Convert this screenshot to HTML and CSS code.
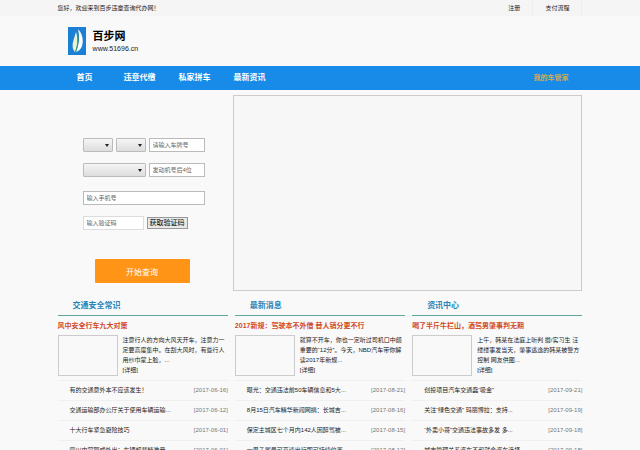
FILE: index.html
```html
<!DOCTYPE html>
<html lang="zh-CN">
<head>
    <meta charset="UTF-8">
    <meta name="viewport" content="width=device-width, initial-scale=1.0">
    <title>百步网</title>
    <link rel="stylesheet" href="styles.css">
</head>
<body>
    <div class="topbar">
        <div class="container topbar-inner">
            <span>您好，欢迎来到百步违章查询代办网！</span>
            <div class="topbar-links">
                <a href="#">注册</a>
                <a href="#">支付流程</a>
            </div>
        </div>
    </div>
    <header class="container header">
        <svg class="logo" viewBox="0 0 18 28" aria-hidden="true">
            <rect width="18" height="28" fill="#1b7fd6"/>
            <path d="M10 2C14 6 16 13 14 19C13 22 11 24 8 25C11 18 12 10 10 2Z" fill="#fff"/>
            <path d="M8 5C10 11 10 18 7 25C5 23 4 20 5 15C6 11 7 8 8 5Z" fill="#e8f3d2"/>
            <path d="M9 4C11 11 10 19 7 26" fill="none" stroke="#3d9a62"/>
        </svg>
        <div>
            <h1 class="site-name">百步网</h1>
            <p class="site-url">www.51696.cn</p>
        </div>
    </header>
    <nav class="nav">
        <div class="container nav-inner">
            <a href="#">首页</a>
            <a href="#">违章代缴</a>
            <a href="#">私家拼车</a>
            <a href="#">最新资讯</a>
            <a class="nav-assistant" href="#">我的车管家</a>
        </div>
    </nav>
    <main class="container">
        <div class="top-section">
            <form class="query-form">
                <div class="form-row">
                    <select aria-label="省份"><option></option></select>
                    <select aria-label="字母"><option></option></select>
                    <input class="short-input" type="text" placeholder="请输入车牌号" aria-label="车牌号">
                </div>
                <div class="form-row">
                    <select aria-label="车辆类型"><option></option></select>
                    <input class="short-input" type="text" placeholder="发动机号后4位" aria-label="发动机号后4位">
                </div>
                <div class="form-row phone-row">
                    <input type="text" placeholder="输入手机号" aria-label="手机号">
                </div>
                <div class="form-row code-row">
                    <input type="text" placeholder="输入验证码" aria-label="验证码">
                    <button class="code-button" type="button">获取验证码</button>
                </div>
                <button class="query-button" type="button">开始查询</button>
            </form>
            <div class="banner"></div>
        </div>
        <div class="news">
            <section>
                <h2>交通安全常识</h2>
                <h3><a href="#">风中安全行车九大对策</a></h3>
                <div class="feature">
                    <div class="thumb"></div>
                    <p>注意行人的方向大风天开车，注意力一定要高度集中。在刮大风时，有些行人用纱巾蒙上脸，...<br><a href="#">[详细]</a></p>
                </div>
                <ul class="news-list">
                    <li><a href="#">有的交通意外本不应该发生！</a><span>[2017-06-16]</span></li>
                    <li><a href="#">交通运输部办公厅关于使用车辆运输...</a><span>[2017-06-12]</span></li>
                    <li><a href="#">十大行车紧急避险技巧</a><span>[2017-06-01]</span></li>
                    <li><a href="#">四川内蒙阿成外出：车辆超载精准量...</a><span>[2017-06-01]</span></li>
                </ul>
            </section>
            <section>
                <h2>最新消息</h2>
                <h3><a href="#">2017新规：驾驶本不外借 替人销分更不行</a></h3>
                <div class="feature">
                    <div class="thumb"></div>
                    <p>就算不开车，你也一定听过司机口中颇重要的“12分”。今天，NBD汽车带你解读2017年新规...<br><a href="#">[详细]</a></p>
                </div>
                <ul class="news-list">
                    <li><a href="#">曝光：交通违法前50车辆信息和5大...</a><span>[2017-08-21]</span></li>
                    <li><a href="#">8月15日汽车精华新闻网摘：长城吉...</a><span>[2017-08-16]</span></li>
                    <li><a href="#">保定主城区七个月内142人因醉驾被...</a><span>[2017-08-15]</span></li>
                    <li><a href="#">一男子驾号可高速出行即可持续位置...</a><span>[2017-08-12]</span></li>
                </ul>
            </section>
            <section>
                <h2>资讯中心</h2>
                <h3><a href="#">喝了半斤牛栏山，酒驾男肇事判无期</a></h3>
                <div class="feature">
                    <div class="thumb"></div>
                    <p>上午，韩某在法庭上听判 摄/实习生 汪缕缕事发当天，肇事逃逸的韩某被警方控制 网友供图...<br><a href="#">[详细]</a></p>
                </div>
                <ul class="news-list">
                    <li><a href="#">创投项目汽车交通蠢“吸金”</a><span>[2017-09-21]</span></li>
                    <li><a href="#">关注“绿色交通” 玛丽博拉：支持...</a><span>[2017-09-19]</span></li>
                    <li><a href="#">“外卖小哥”交通违法事故多发 多...</a><span>[2017-09-18]</span></li>
                    <li><a href="#">城市管理关系汽车不和就会汽车选择</a><span>[2017-09-18]</span></li>
                </ul>
            </section>
        </div>
    </main>
</body>
</html>
```

FILE: styles.css
```css
* {
    box-sizing: border-box;
}
body {
    margin: 0;
    background-color: #f9f9f9;
    color: #222;
    font-family: "Liberation Sans", "Noto Sans CJK SC", sans-serif;
    font-size: 6px;
}
h1, h2, h3, p, ul {
    margin: 0;
    padding: 0;
}
a {
    color: inherit;
    text-decoration: none;
}
input, select, button {
    margin: 0;
    font-family: inherit;
    font-size: 6px;
}
.container {
    width: 82%;
    margin: 0 auto;
}
.topbar {
    background-color: #f5f5f5;
}
.topbar-inner {
    display: flex;
    justify-content: space-between;
    line-height: 16px;
}
.topbar-links {
    display: flex;
}
.topbar-links a {
    padding: 0 12px;
    border-right: 1px solid #eee;
}
.header {
    display: flex;
    align-items: center;
    gap: 7px;
    height: 50px;
    padding-left: 10px;
}
.logo {
    width: 18px;
    height: 28px;
}
.site-name {
    color: #000;
    font-size: 11px;
    line-height: 15px;
}
.site-url {
    font-size: 7px;
    line-height: 10px;
}
.nav {
    background-color: #188ae8;
}
.nav-inner {
    display: flex;
    gap: 23px;
    padding: 0 14px 0 19px;
    color: #fff;
    font-size: 8px;
    font-weight: bold;
    line-height: 24px;
}
.nav-inner a:first-child {
    margin-right: 8px;
}
.nav-inner .nav-assistant {
    margin-left: auto;
    color: #d5ac4c;
    font-size: 7px;
}

/* query form and banner */
.top-section {
    display: grid;
    grid-template-columns: 1fr 2fr;
    padding-top: 5px;
}
.query-form {
    padding: 43px 28px 0 25px;
}
.form-row {
    display: flex;
    align-items: center;
    gap: 3px;
    margin-bottom: 11px;
}
.form-row input {
    flex: 1;
    min-width: 0;
    height: 14px;
    padding: 0 3px;
    border: 1px solid #bbb;
    background-color: #fff;
}
.form-row .short-input {
    flex: none;
    width: 56px;
}
.form-row input::placeholder {
    color: #666;
}
.form-row select {
    flex: 1;
    min-width: 0;
    height: 14px;
    border: 1px solid #bbb;
    border-radius: 1px;
    appearance: none;
    background: url("data:image/svg+xml,%3Csvg xmlns='http://www.w3.org/2000/svg' viewBox='0 0 4 3'%3E%3Cpath d='M0 0h4L2 3z' fill='%23222'/%3E%3C/svg%3E") no-repeat right 3px center / 4px 3px, linear-gradient(#f5f5f5, #ddd);
}
.phone-row {
    margin-top: 14px;
}
.code-row input {
    border-color: #ddd;
}
.code-button {
    height: 12px;
    margin-right: 17px;
    padding: 0 2px;
    border: 1px solid #999;
    background-color: #e8e8e8;
    color: #000;
    font-size: 7px;
    line-height: 8px;
}
.query-button {
    display: block;
    width: 95px;
    height: 24px;
    margin: 29px 0 0 12px;
    border: none;
    border-radius: 1px;
    background-color: #ff9416;
    color: #fff;
    font-size: 8px;
}
.banner {
    height: 196px;
    border: 1px solid #ccc;
    background-color: #f7f7f7;
}

/* news columns */
.news {
    display: grid;
    grid-template-columns: repeat(3, 1fr);
    gap: 7px;
    padding-top: 5px;
}
.news h2 {
    padding-left: 15px;
    border-bottom: 1px solid #5fa79b;
    color: #2585b8;
    font-size: 8px;
    line-height: 19px;
}
.news h3 {
    color: #d2491f;
    font-size: 7px;
    line-height: 19px;
    white-space: nowrap;
}
.feature {
    display: flex;
    gap: 5px;
    padding-bottom: 4px;
}
.thumb {
    flex: none;
    width: 60px;
    height: 41px;
    border: 1px solid #ccc;
}
.feature p {
    line-height: 10px;
}
.news-list {
    list-style: none;
}
.news-list li {
    display: flex;
    justify-content: space-between;
    padding-left: 12px;
    border-top: 1px solid #f0f0f0;
    line-height: 19px;
    white-space: nowrap;
}
.news-list span {
    color: #777;
}
```
